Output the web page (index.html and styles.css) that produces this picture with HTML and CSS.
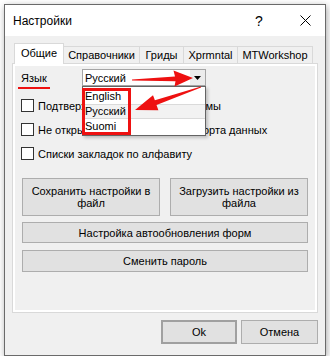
FILE: index.html
```html
<!DOCTYPE html>
<html lang="ru">
<head>
    <meta charset="UTF-8">
    <title>Настройки</title>
    <link rel="stylesheet" href="styles.css">
</head>
<body>
    <div class="window">
        <!-- Заголовок окна -->
        <div class="titlebar">
            <span class="title">Настройки</span>
            <span class="help">?</span>
            <span class="close">
                <svg width="11" height="11" viewBox="0 0 11 11"><path d="M0.5 0.5L10.5 10.5M10.5 0.5L0.5 10.5" stroke="#000" stroke-width="1"/></svg>
            </span>
        </div>

        <div class="content">
            <div class="tabctl">
                <div class="tabs">
                    <div class="tab tab-general active">Общие</div>
                    <div class="tab tab-refs">Справочники</div>
                    <div class="tab tab-grids">Гриды</div>
                    <div class="tab tab-xp">Xprmntal</div>
                    <div class="tab tab-mt">MTWorkshop</div>
                </div>

                <div class="panel">
                    <div class="lang-row">
                        <span class="lang-label">Язык</span>
                        <div class="combo">
                            <span class="combo-text">Русский</span>
                            <span class="combo-btn">
                                <svg width="7" height="4" viewBox="0 0 7 4"><path d="M0 0H7L3.5 4Z" fill="#000"/></svg>
                            </span>
                            <div class="dropdown">
                                <div class="item">English</div>
                                <div class="item hover">Русский</div>
                                <div class="item">Suomi</div>
                            </div>
                        </div>
                    </div>

                    <div class="check"><span class="box"></span>Подтверждать выход из программы</div>
                    <div class="check"><span class="box"></span>Не открывать форму после экспорта данных</div>
                    <div class="check"><span class="box"></span>Списки закладок по алфавиту</div>

                    <div class="btn-pair">
                        <button class="btn tall">Сохранить настройки в файл</button>
                        <button class="btn tall">Загрузить настройки из файла</button>
                    </div>
                    <button class="btn wide">Настройка автообновления форм</button>
                    <button class="btn wide wide-last">Сменить пароль</button>
                </div>
            </div>

            <div class="footer">
                <button class="btn dlg default">Ok</button>
                <button class="btn dlg">Отмена</button>
            </div>
        </div>
    </div>

    <!-- Пометки поверх скриншота -->
    <svg class="marks" width="330" height="362" viewBox="0 0 330 362">
        <rect x="18" y="87" width="32" height="2" fill="#ee1111"/>
        <rect x="83.5" y="89.5" width="46" height="44" fill="none" stroke="#ee1111" stroke-width="3"/>
        <polygon points="132,79.4 175,76.6 173.5,70.5 193,78 174.5,86.5 175.5,81.2 132,80.4" fill="#ee1111"/>
        <polygon points="201,86.4 154.9,100.3 153,95.2 135,110 158.4,110.2 156.5,105.1 201,87.6" fill="#ee1111"/>
    </svg>
</body>
</html>
```

FILE: styles.css
```css
* {
    box-sizing: border-box;
}
body {
    margin: 0;
    background-color: #ffffff;
    font-family: "Liberation Sans", Arial, sans-serif;
    font-size: 11px;
    color: #000;
}
.window {
    margin: 4px 0 0 4px;
    width: 322px;
    height: 352px;
    border: 1px solid #6a6a6a;
    background-color: #f0f0f0;
    box-shadow: 1px 2px 7px rgba(0, 0, 0, 0.35);
    display: flex;
    flex-direction: column;
}
.titlebar {
    height: 31px;
    background-color: #fff;
    display: flex;
    align-items: center;
    padding-left: 8px;
}
.title {
    flex: 1;
    font-size: 12px;
}
.help {
    width: 40px;
    margin-right: 6px;
    text-align: center;
    font-size: 14px;
}
.close {
    width: 40px;
    display: flex;
    justify-content: center;
}
.content {
    flex: 1;
    padding: 7px 7px 0 7px;
    display: flex;
    flex-direction: column;
}
.tabs {
    display: flex;
    align-items: flex-end;
    height: 20px;
    padding-left: 3px;
}
.tab {
    height: 17px;
    margin-left: -1px;
    border: 1px solid #d9d9d9;
    border-bottom: none;
    background-color: #f0f0f0;
    text-align: center;
    line-height: 16px;
}
.tab.active {
    height: 21px;
    margin-bottom: -1px;
    background-color: #fff;
    position: relative;
    z-index: 1;
    line-height: 19px;
}
.tab-general { width: 50px; }
.tab-refs { width: 77px; }
.tab-grids { width: 45px; }
.tab-xp { width: 55px; }
.tab-mt { width: 76px; }
.panel {
    height: 250px;
    border: 1px solid #d9d9d9;
    box-shadow: inset 0 0 0 2px #fff;
    padding: 5px 9px 0 8px;
    display: flex;
    flex-direction: column;
}
.lang-row {
    display: flex;
    align-items: center;
    height: 17px;
}
.lang-label {
    width: 61px;
}
.combo {
    position: relative;
    width: 124px;
    height: 17px;
    border: 1px solid #a5a5a5;
    background-color: #fff;
    display: flex;
    align-items: center;
}
.combo-text {
    flex: 1;
    padding-left: 2px;
}
.combo-btn {
    width: 15px;
    height: 100%;
    background-color: #ececec;
    display: flex;
    align-items: center;
    justify-content: center;
}
.dropdown {
    position: absolute;
    left: -1px;
    top: 16px;
    width: 124px;
    padding: 2px 0 1px;
    border: 1px solid #646464;
    background-color: #fff;
    box-shadow: 2px 2px 3px rgba(0, 0, 0, 0.2);
    z-index: 2;
}
.item {
    height: 15px;
    line-height: 15px;
    padding-left: 2px;
}
.item.hover {
    background-color: #f2f2f2;
    border-top: 1px solid #dadada;
    border-bottom: 1px solid #dadada;
    line-height: 13px;
}
.check {
    display: flex;
    align-items: center;
    gap: 4px;
    height: 13px;
    margin-top: 11px;
    white-space: nowrap;
}
.lang-row + .check {
    margin-top: 13px;
}
.box {
    width: 13px;
    height: 13px;
    border: 1px solid #333;
    background-color: #fff;
    flex: none;
}
.btn {
    font: inherit;
    color: #000;
    background-color: #e1e1e1;
    border: 1px solid #adadad;
    padding: 0 4px;
}
.btn-pair {
    display: flex;
    gap: 10px;
    margin: 18px 0 0 1px;
}
.tall {
    flex: 1;
    height: 38px;
    line-height: 12px;
}
.wide {
    margin: 6px 0 0 1px;
    height: 21px;
}
.wide-last {
    margin-top: 7px;
    height: 22px;
}
.footer {
    display: flex;
    justify-content: flex-end;
    gap: 4px;
    margin-top: 7px;
}
.dlg {
    width: 77px;
    height: 24px;
}
.default {
    width: 76px;
    border: 2px solid #a0a0a0;
}
.marks {
    position: absolute;
    left: 0;
    top: 0;
    z-index: 10;
    pointer-events: none;
}
```
